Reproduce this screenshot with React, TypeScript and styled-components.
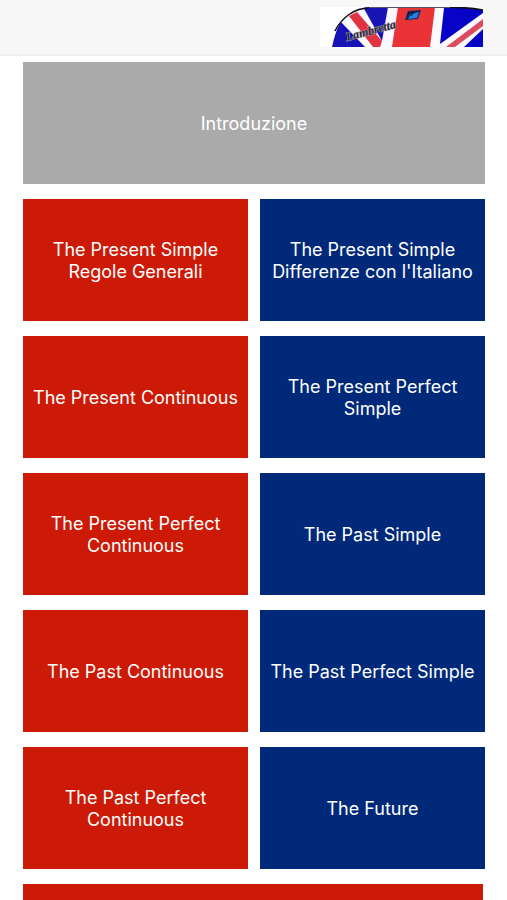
import React from "react";
import styled, { createGlobalStyle } from "styled-components";

const GlobalStyle = createGlobalStyle`
  *, *::before, *::after { box-sizing: border-box; }
  body {
    margin: 0;
    background: #ffffff;
    font-family: Inter, "Liberation Sans", sans-serif;
  }
`;

type Tone = "gray" | "red" | "blue";

const tones: Record<Tone, string> = {
  gray: "#aaaaaa",
  red: "#cc1a06",
  blue: "#012979",
};

const Screen = styled.div`
  display: flex;
  flex-direction: column;
  height: 100vh;
`;

const NavBar = styled.header`
  display: flex;
  flex: none;
  justify-content: flex-end;
  padding: 7px 24px 7px;
  background: #f7f7f7;
  border-bottom: 2px solid #f0f0f0;
`;

const Logo = styled.svg`
  display: block;
  width: 163px;
  height: 40px;
`;

const Content = styled.main`
  flex: 1;
  min-height: 0;
  overflow-y: auto;
  scrollbar-width: none;
  padding: 6px 22px 15px 23px;
`;

const LessonGrid = styled.nav`
  display: grid;
  grid-template-columns: 1fr 1fr;
  gap: 15px 12px;
`;

const Tile = styled.button<{ $tone: Tone; $wide?: boolean; $inset?: boolean }>`
  display: flex;
  align-items: center;
  justify-content: center;
  grid-column: ${({ $wide }) => ($wide ? "1 / -1" : "auto")};
  height: 122px;
  margin: 0 ${({ $inset }) => ($inset ? "2px" : "0")} 0 0;
  padding: 2px 8px 0;
  border: 0;
  border-radius: 0;
  background: ${({ $tone }) => tones[$tone]};
  color: #ffffff;
  font-family: inherit;
  font-size: 18px;
  font-weight: 400;
  line-height: 22px;
  text-align: center;
  white-space: pre-line;
  cursor: pointer;
`;

const lessons: { title: string; tone: Tone; wide?: boolean; inset?: boolean }[] = [
  { title: "Introduzione", tone: "gray", wide: true },
  { title: "The Present Simple\nRegole Generali", tone: "red" },
  { title: "The Present Simple\nDifferenze con l'Italiano", tone: "blue" },
  { title: "The Present Continuous", tone: "red" },
  { title: "The Present Perfect\nSimple", tone: "blue" },
  { title: "The Present Perfect\nContinuous", tone: "red" },
  { title: "The Past Simple", tone: "blue" },
  { title: "The Past Continuous", tone: "red" },
  { title: "The Past Perfect Simple", tone: "blue" },
  { title: "The Past Perfect\nContinuous", tone: "red" },
  { title: "The Future", tone: "blue" },
  { title: "", tone: "red", wide: true, inset: true },
];

function FlagLogo() {
  return (
    <Logo viewBox="0 0 163 40" role="img" aria-label="Union Jack scooter panel">
      <defs>
        <clipPath id="panel">
          <path d="M12 40C14 31 16 23 20 17C26 8 35 1 49 0H143L163 3V40Z" />
        </clipPath>
      </defs>
      <rect width="163" height="40" fill="#ffffff" />
      <g clipPath="url(#panel)">
        <rect width="163" height="40" fill="#fbf8ff" />
        <path d="M10 40L20 14L45 40Z" fill="#1713b4" />
        <path d="M43 0H68L62 34Z" fill="#1713b4" />
        <path d="M29 9L37 5L62 34L60 40H53Z" fill="#e33340" />
        <path d="M78 0H115L110 40H72Z" fill="#ea3336" />
        <path d="M124 1H163V6L120 37Z" fill="#0703c6" />
        <path d="M163 12V19L135 40H126Z" fill="#dd4c5c" />
        <path d="M163 22V40H144Z" fill="#0703c6" />
      </g>
      <path d="M15 24C22 10 35 1 49 1" fill="none" stroke="#080a12" strokeWidth="1.5" />
      <path d="M49 0.5H130" fill="none" stroke="#55526a" strokeWidth="1" />
      <path d="M130 0.5Q147 0 163 3" fill="none" stroke="#10101c" strokeWidth="1.5" />
      <path d="M88 4L101 3L98 12L85 13Z" fill="#102b59" />
      <path d="M91 7L99 5L97 11L88 12Z" fill="#267ce0" />
      <path d="M87 7L94 5L91 9" fill="none" stroke="#0b1020" strokeWidth="1" />
      <text
        x="27"
        y="34"
        transform="rotate(-15 27 34)"
        fill="#2c2a33"
        stroke="#a9a4b4"
        strokeWidth="1"
        paintOrder="stroke"
        fontFamily="Liberation Serif, serif"
        fontSize="12"
        fontStyle="italic"
        fontWeight="700"
      >
        Lambretta
      </text>
    </Logo>
  );
}

export default function App() {
  return (
    <>
      <GlobalStyle />
      <Screen>
        <NavBar>
          <FlagLogo />
        </NavBar>
        <Content>
          <LessonGrid aria-label="Lezioni">
            {lessons.map(({ title, tone, wide, inset }, index) => (
              <Tile key={index} type="button" $tone={tone} $wide={wide} $inset={inset}>
                {title}
              </Tile>
            ))}
          </LessonGrid>
        </Content>
      </Screen>
    </>
  );
}
